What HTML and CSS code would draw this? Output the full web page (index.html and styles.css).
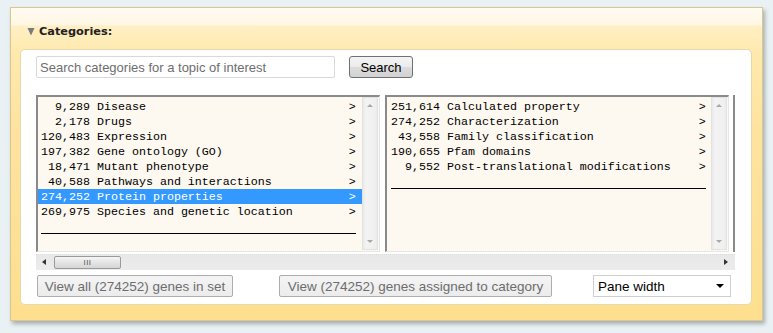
FILE: index.html
```html
<!DOCTYPE html>
<html>
<head>
<meta charset="utf-8">
<link rel="stylesheet" href="styles.css">
</head>
<body>
<div class="panel">
  <div class="panel-head"><svg class="tri" width="8" height="9" viewBox="0 0 8 9"><polygon points="0.5,1 7.5,1 4,8.5" fill="#7a7a7a"/></svg><span class="title">Categories:</span></div>
  <div class="inner">
    <div class="search-row">
      <input class="search-input" type="text" placeholder="Search categories for a topic of interest">
      <button class="btn-search">Search</button>
    </div>
    <div class="lists">
      <div class="boxes">
        <div class="box box-left">
          <div class="list">
            <div class="row"><span class="n">9,289</span><span class="t">Disease</span><span class="a">&gt;</span></div>
            <div class="row"><span class="n">2,178</span><span class="t">Drugs</span><span class="a">&gt;</span></div>
            <div class="row"><span class="n">120,483</span><span class="t">Expression</span><span class="a">&gt;</span></div>
            <div class="row"><span class="n">197,382</span><span class="t">Gene ontology (GO)</span><span class="a">&gt;</span></div>
            <div class="row"><span class="n">18,471</span><span class="t">Mutant phenotype</span><span class="a">&gt;</span></div>
            <div class="row"><span class="n">40,588</span><span class="t">Pathways and interactions</span><span class="a">&gt;</span></div>
            <div class="row sel"><span class="n">274,252</span><span class="t">Protein properties</span><span class="a">&gt;</span></div>
            <div class="row"><span class="n">269,975</span><span class="t">Species and genetic location</span><span class="a">&gt;</span></div>
            <div class="rule"></div>
          </div>
          <div class="vscroll"><span class="up"></span><span class="down"></span></div>
        </div>
        <div class="box box-right">
          <div class="list">
            <div class="row"><span class="n">251,614</span><span class="t">Calculated property</span><span class="a">&gt;</span></div>
            <div class="row"><span class="n">274,252</span><span class="t">Characterization</span><span class="a">&gt;</span></div>
            <div class="row"><span class="n">43,558</span><span class="t">Family classification</span><span class="a">&gt;</span></div>
            <div class="row"><span class="n">190,655</span><span class="t">Pfam domains</span><span class="a">&gt;</span></div>
            <div class="row"><span class="n">9,552</span><span class="t">Post-translational modifications</span><span class="a">&gt;</span></div>
            <div class="rule"></div>
          </div>
          <div class="vscroll"><span class="up"></span><span class="down"></span></div>
        </div>
      </div>
      <div class="hscroll">
        <span class="left"></span>
        <span class="thumb"><span class="grip">III</span></span>
        <span class="right"></span>
      </div>
    </div>
    <div class="actions">
      <button class="btn-dis btn-all">View all (274252) genes in set</button>
      <button class="btn-dis btn-cat">View (274252) genes assigned to category</button>
      <div class="select"><span>Pane width</span><span class="caret"></span></div>
    </div>
  </div>
</div>
</body>
</html>
```

FILE: styles.css
```css
html, body {
  margin: 0;
  padding: 0;
}
body {
  background: #e9f1f4;
  width: 773px;
  height: 333px;
  overflow: hidden;
  font-family: "Liberation Sans", Arial, sans-serif;
}
.panel {
  box-sizing: border-box;
  margin: 7px 0 0 10px;
  width: 753px;
  height: 314px;
  border: 1px solid #d8c88e;
  background: linear-gradient(#fffbf2 0px, #fff7e4 17px, #ffefc4 18px, #fee9ad 45px, #fee3a0 120px, #fddf8e 313px);
  box-shadow: 2px 3px 4px rgba(0, 0, 0, 0.28);
  display: flex;
  flex-direction: column;
}
.panel-head {
  height: 41px;
  display: flex;
  align-items: center;
  padding-left: 16px;
  padding-top: 6px;
  box-sizing: border-box;
}
.tri {
  flex-shrink: 0;
  display: block;
  margin-right: 4px;
}
.title {
  font-family: "DejaVu Sans", Verdana, sans-serif;
  font-weight: bold;
  font-size: 11.3px;
  color: #222;
}
.inner {
  box-sizing: border-box;
  margin: 0 10px 0 9px;
  height: 256px;
  background: #fff;
  border: 1px solid #e8d9aa;
  border-radius: 5px;
  padding: 6px 0 0 15px;
}
.search-row {
  display: flex;
  align-items: center;
  height: 22px;
}
.search-input {
  box-sizing: border-box;
  width: 299px;
  height: 22px;
  border: 1px solid #d9d9d9;
  border-radius: 2px;
  padding: 0 3px;
  font-family: "Liberation Sans", Arial, sans-serif;
  font-size: 13px;
  color: #555;
  outline: none;
}
.search-input::placeholder {
  color: #6e6e6e;
}
.btn-search {
  box-sizing: border-box;
  margin-left: 14px;
  width: 64px;
  height: 22px;
  border: 1px solid #707070;
  border-radius: 3px;
  background: linear-gradient(#f4f4f4 0%, #ebebeb 50%, #dcdcdc 51%, #d2d2d2 100%);
  font-family: "Liberation Sans", Arial, sans-serif;
  font-size: 13px;
  color: #000;
  padding: 0;
}
.lists {
  margin-top: 17px;
  width: 699px;
  height: 175px;
  display: flex;
  flex-direction: column;
}
.boxes {
  display: flex;
  height: 157px;
  gap: 5px;
  border-right: 2px solid #8a8a8a;
  width: 699px;
  box-sizing: border-box;
}
.box {
  box-sizing: border-box;
  display: flex;
  background: #fdf8f0;
  border-top: 2px solid #8a8a8a;
  border-left: 2px solid #8a8a8a;
  border-right: 1px solid #e6e6e6;
  border-bottom: 1px solid #e6e6e6;
  height: 157px;
}
.box-left {
  width: 344px;
}
.box-right {
  width: 344px;
}
.list {
  flex: 1;
  font-family: "Liberation Mono", "Courier New", monospace;
  font-size: 11.67px;
  color: #000;
  padding-top: 2px;
  overflow: hidden;
}
.row {
  display: grid;
  grid-template-columns: 7ch 1ch 36ch 1ch;
  height: 15px;
  line-height: 16px;
  padding-left: 3px;
  white-space: pre;
}
.row .n {
  grid-column: 1;
  text-align: right;
}
.row .t {
  grid-column: 3;
}
.row .a {
  grid-column: 4;
}
.row.sel {
  background: #3399ff;
  color: #fff;
}
.box-right .row {
  padding-left: 4px;
}
.rule {
  margin: 14px 0 0 3px;
  width: 45ch;
  height: 1px;
  background: #000;
}
.box-right .rule {
  margin-left: 4px;
}
.vscroll {
  position: relative;
  box-sizing: border-box;
  width: 16px;
  margin: 0 1px 1px 0;
  background: linear-gradient(90deg, #e9e9e9 0, #f3f3f3 3px, #f0f0f0 12px, #e4e4e4 16px);
  border: 1px solid #e2e2e2;
}
.vscroll .up, .vscroll .down {
  position: absolute;
  left: 4px;
  width: 0;
  height: 0;
  border-left: 3px solid transparent;
  border-right: 3px solid transparent;
}
.vscroll .up {
  top: 6px;
  border-bottom: 3px solid #a8a8a8;
}
.vscroll .down {
  bottom: 6px;
  border-top: 3px solid #a8a8a8;
}
.hscroll {
  position: relative;
  box-sizing: border-box;
  margin-top: 2px;
  height: 16px;
  width: 699px;
  border-top: 1px dotted #dcdcdc;
  background: linear-gradient(#e8e8e8, #ececec);
}
.hscroll .left {
  position: absolute;
  left: 6px;
  top: 4px;
  width: 0;
  height: 0;
  border-top: 3.5px solid transparent;
  border-bottom: 3.5px solid transparent;
  border-right: 4px solid #333;
}
.hscroll .right {
  position: absolute;
  right: 7px;
  top: 4px;
  width: 0;
  height: 0;
  border-top: 3.5px solid transparent;
  border-bottom: 3.5px solid transparent;
  border-left: 4px solid #333;
}
.hscroll .thumb {
  position: absolute;
  left: 18px;
  top: 1px;
  box-sizing: border-box;
  width: 67px;
  height: 13px;
  border: 1px solid #9a9a9a;
  border-radius: 2px;
  background: linear-gradient(#f6f6f6, #e4e4e4 50%, #d6d6d6);
  display: flex;
  align-items: center;
  justify-content: center;
}
.hscroll .grip {
  font-family: "Liberation Sans", Arial, sans-serif;
  font-size: 8px;
  line-height: 8px;
  letter-spacing: 0.5px;
  color: #555;
}
.actions {
  margin-top: 5px;
  display: flex;
  align-items: center;
  height: 22px;
  padding-left: 1px;
}
.btn-dis {
  box-sizing: border-box;
  height: 22px;
  border: 1px solid #adadad;
  border-radius: 2px;
  background: linear-gradient(#f4f4f4, #ececec);
  font-family: "Liberation Sans", Arial, sans-serif;
  font-size: 13.5px;
  color: #6d6d6d;
  padding: 0;
}
.btn-all {
  width: 196px;
}
.btn-cat {
  margin-left: 46px;
  width: 273px;
}
.select {
  margin-left: 41px;
  box-sizing: border-box;
  width: 138px;
  height: 22px;
  border: 1px solid #cfcfcf;
  background: #fff;
  display: flex;
  align-items: center;
  justify-content: space-between;
  padding: 0 6px 0 4px;
  font-size: 13.5px;
  color: #000;
}
.select .caret {
  width: 0;
  height: 0;
  border-left: 4px solid transparent;
  border-right: 4px solid transparent;
  border-top: 4px solid #000;
}
```
